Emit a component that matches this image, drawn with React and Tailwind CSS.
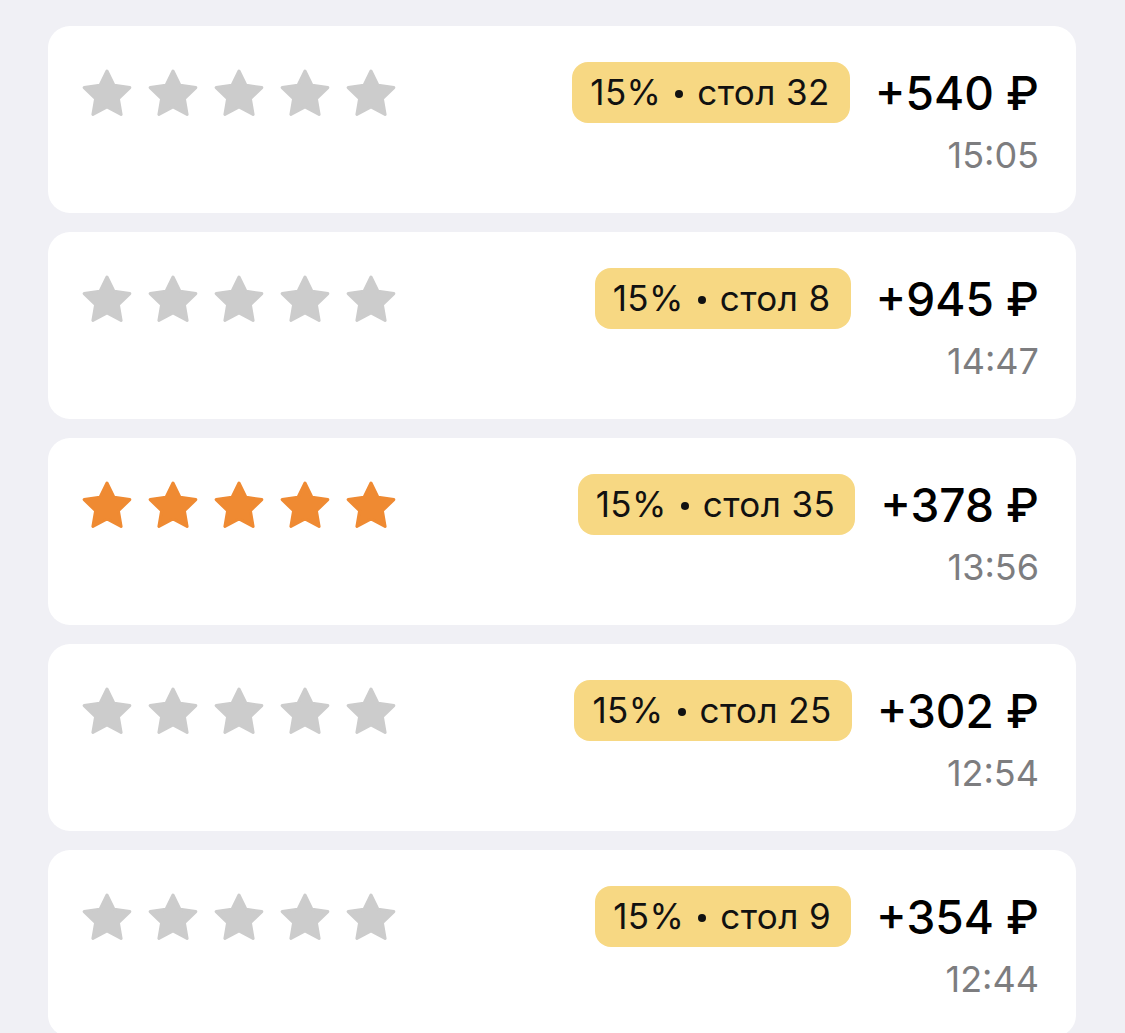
import React from 'react'

const rows = [
  { table: 32, amount: 540, time: '15:05', rated: false },
  { table: 8, amount: 945, time: '14:47', rated: false },
  { table: 35, amount: 378, time: '13:56', rated: true },
  { table: 25, amount: 302, time: '12:54', rated: false },
  { table: 9, amount: 354, time: '12:44', rated: false },
]

function Star({ color }) {
  return (
    <svg width="50" height="48" viewBox="0 0 50 48" className="shrink-0">
      <polygon
        points="25,2 32.05,16.29 47.83,18.58 36.41,29.71 39.11,45.42 25,38 10.89,45.42 13.59,29.71 2.17,18.58 17.95,16.29"
        fill={color}
        stroke={color}
        strokeWidth="3"
        strokeLinejoin="round"
      />
    </svg>
  )
}

function Row({ table, amount, time, rated }) {
  const color = rated ? '#ef8a32' : '#cccccc'
  return (
    <div className="bg-white rounded-[22px] h-[187px] pt-[36px] pl-[34px] pr-[37px] flex flex-col">
      <div className="flex items-center justify-between h-[61px]">
        <div className="flex items-center gap-[16px]">
          {[0, 1, 2, 3, 4].map((i) => (
            <Star key={i} color={color} />
          ))}
        </div>
        <div className="flex items-center gap-[25px]">
          <div className="h-[61px] pl-[18px] pr-[20px] rounded-[16px] bg-[#f7d883] flex items-center text-[35px] tracking-[0.4px] text-[#111]">
            <span>15%</span>
            <span className="mx-[14px] w-[8px] h-[8px] rounded-full bg-[#111] mt-[2px]" />
            <span>стол {table}</span>
          </div>
          <div className="text-[46px] font-medium text-black leading-none">
            +{amount} ₽
          </div>
        </div>
      </div>
      <div className="mt-[14px] text-right text-[36px] leading-none text-[#7d7d7f]">{time}</div>
    </div>
  )
}

export default function App() {
  return (
    <div
      className="min-h-screen bg-[#f0f0f5] pt-[26px] pl-[48px] pr-[49px] flex flex-col gap-[19px]"
      style={{ fontFamily: 'Inter, "Noto Sans", sans-serif' }}
    >
      {rows.map((r) => (
        <Row key={r.time} {...r} />
      ))}
    </div>
  )
}
